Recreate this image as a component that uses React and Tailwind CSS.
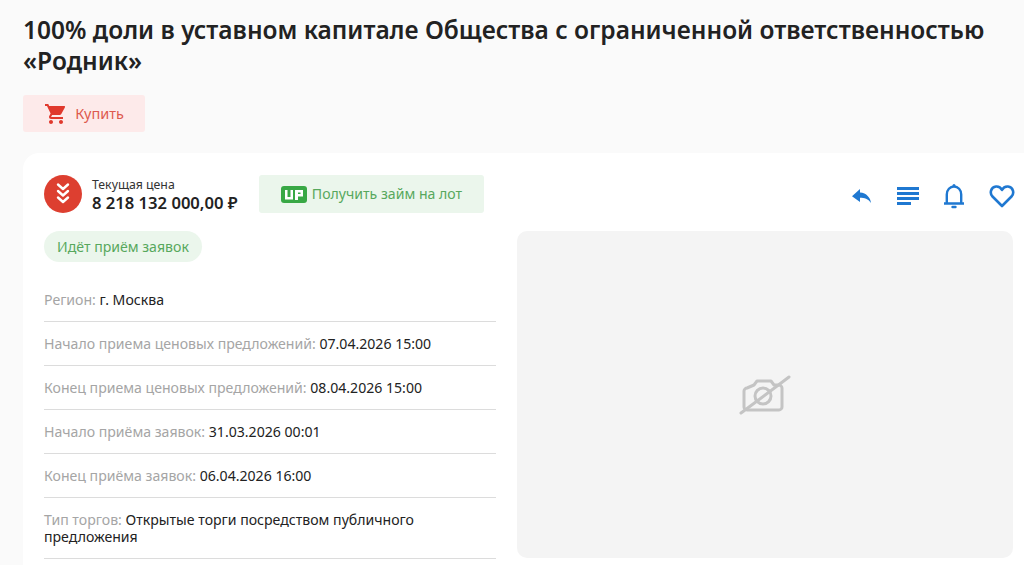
import React from 'react';

const rows = [
  ['Регион:', 'г. Москва'],
  ['Начало приема ценовых предложений:', '07.04.2026 15:00'],
  ['Конец приема ценовых предложений:', '08.04.2026 15:00'],
  ['Начало приёма заявок:', '31.03.2026 00:01'],
  ['Конец приёма заявок:', '06.04.2026 16:00'],
  ['Тип торгов:', 'Открытые торги посредством публичного предложения'],
];

const App = () => {
  return (
    <div className="h-[565px] w-[1024px] overflow-hidden bg-[#fafafa] pl-[23px] pt-[14px] font-['Noto_Sans',sans-serif] text-[#222]">
      <h1 className="w-[980px] text-[24.5px] font-semibold leading-[31px] text-[#222]">
        100% доли в уставном капитале Общества с ограниченной ответственностью «Родник»
      </h1>

      {/* Buy button */}
      <button className="mt-[19px] flex h-[37px] w-[122px] items-center justify-center gap-[7px] rounded-[3px] bg-[#fdeaea] text-[14.5px] text-[#dd5a4e]">
        <svg width="24" height="24" viewBox="0 0 24 24" fill="#e0392d">
          <path d="M7 18c-1.1 0-1.99.9-1.99 2S5.9 22 7 22s2-.9 2-2-.9-2-2-2zM1 2v2h2l3.6 7.59-1.35 2.45c-.16.28-.25.61-.25.96 0 1.1.9 2 2 2h12v-2H7.42c-.14 0-.25-.11-.25-.25l.03-.12.9-1.63h7.45c.75 0 1.41-.41 1.75-1.03l3.58-6.49A1 1 0 0 0 20 4H5.21l-.94-2H1zm16 16c-1.1 0-1.99.9-1.99 2s.89 2 1.99 2 2-.9 2-2-.9-2-2-2z" />
        </svg>
        Купить
      </button>

      {/* Lot card */}
      <div className="mt-[21px] h-[500px] w-[1020px] rounded-tl-[16px] bg-white pl-[21px] pt-[22px]">
        <div className="flex items-center">
          <div className="flex h-[38px] w-[38px] items-center justify-center rounded-full bg-[#dd3f30]">
            <svg width="18" height="26" viewBox="0 0 18 26" fill="none" stroke="#fff" strokeWidth="2.4" strokeLinecap="round" strokeLinejoin="round">
              <path d="M4 3.500 9 8l5-4.500M4 10l5 4.500 5-4.500M4 16.500 9 21l5-4.500" />
            </svg>
          </div>
          <div className="ml-[10px] w-[167px] pt-[3px]">
            <div className="text-[12.3px] leading-[14px] text-[#333]">Текущая цена</div>
            <div className="text-[16.6px] font-semibold leading-[21px] text-[#222]">8 218 132 000,00 ₽</div>
          </div>
          <div className="flex h-[38px] w-[225px] items-center justify-center gap-[5px] rounded-[3px] bg-[#ebf6ec] text-[14.1px] text-[#57a85d]">
            <svg width="26" height="17" viewBox="0 0 26 17">
              <rect width="26" height="17" rx="3" fill="#38a845" />
              <path d="M4 4h2.500v7h3V4H12v9.500H4zM14 4h8v6.500h-5V14h-3zM17 6.500V8h2.500V6.500z" fill="#fff" />
            </svg>
            Получить займ на лот
          </div>

          {/* Actions */}
          <div className="ml-[367px] mt-[3px] flex items-center gap-[24px]">
            <svg width="22" height="18" viewBox="0 0 22 18" fill="#1f78d1">
              <path d="M9 2 1 9.300 9 15v-4.200c4.500 0 8 1 11 5.200-.6-5.500-4.500-10-11-10.500z" />
            </svg>
            <svg width="22" height="20" viewBox="0 0 22 20" fill="#1f78d1">
              <path d="M0 1h22v3H0zM0 6h22v3H0zM0 11h22v3H0zM0 16h14v3H0z" />
            </svg>
            <svg width="22" height="26" viewBox="0 0 22 26" fill="none" stroke="#1f78d1" strokeWidth="2.400">
              <path d="M1 20.500h20M3.800 20.500v-9C3.800 7 7 3.500 11 3.500s7.200 3.500 7.200 8v9" />
              <path d="M9.500 24h3" strokeLinecap="round" />
              <circle cx="11" cy="2.500" r="1.500" fill="#1f78d1" stroke="none" />
            </svg>
            <svg width="26" height="24" viewBox="0 0 26 24" fill="none" stroke="#1f78d1" strokeWidth="2.600" strokeLinejoin="round">
              <path d="M13 22 3.500 12.500C.5 9.500 1.500 3 7 2.500c2.800-.2 4.800 1 6 3.500 1.200-2.500 3.200-3.700 6-3.500 5.500.5 6.500 7 3.500 10z" />
            </svg>
          </div>
        </div>

        <div className="mt-[18px] flex items-start">
          <div className="w-[452px]">
            <div className="flex h-[31px] w-[158px] items-center justify-center rounded-full bg-[#ebf6ec] text-[14.1px] text-[#57a85d]">
              Идёт приём заявок
            </div>
            <div className="mt-[16px]">
              {rows.map(([label, value]) => (
                <div key={label} className="border-b border-[#dcdcdc] py-[13px] text-[14.1px] leading-[17px]">
                  <span className="text-[#a5a5a5]">{label}</span> <span className="text-[#222]">{value}</span>
                </div>
              ))}
            </div>
          </div>

          {/* Photo placeholder */}
          <div className="ml-[21px] flex h-[327px] w-[496px] items-center justify-center rounded-[10px] bg-[#f4f4f4]">
            <svg width="52" height="40" viewBox="0 0 52 40" fill="none" stroke="#c4c4c4" strokeWidth="3" strokeLinecap="round" strokeLinejoin="round">
              <path d="M8 13c-1.500 0-3 1.500-3 3v16c0 1.500 1.500 3 3 3h32c1.500 0 3-1.500 3-3V13c0-1.500-1.500-3-3-3h-5l-3-4H18l-3 4z" />
              <circle cx="24" cy="21" r="8" />
              <path d="M2 38 50 2" />
            </svg>
          </div>
        </div>
      </div>
    </div>
  );
};

export default App;
